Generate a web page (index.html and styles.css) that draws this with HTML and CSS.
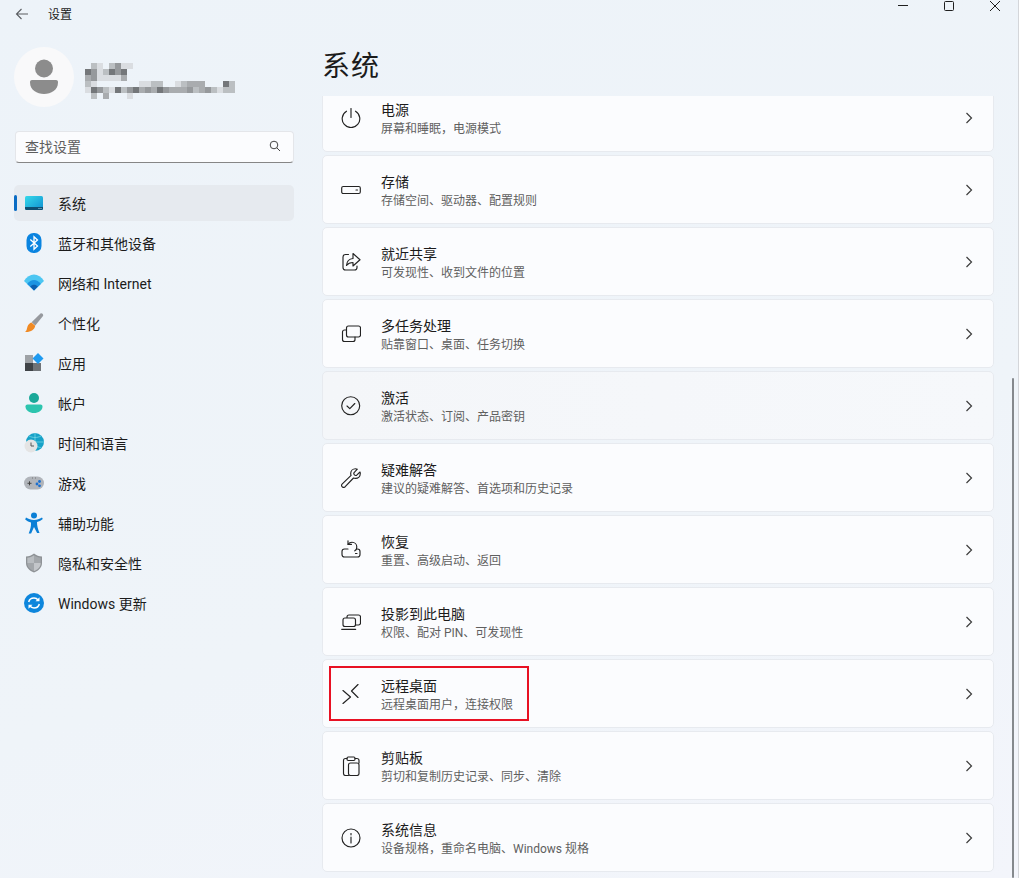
FILE: index.html
```html
<!DOCTYPE html>
<html lang="zh-CN">
<head>
  <meta charset="UTF-8">
  <title>设置</title>
  <meta name="viewport" content="width=device-width, initial-scale=1.0">
  <link rel="stylesheet" href="styles.css">
</head>
<body>

<!-- Title bar -->
<div class="titlebar">
  <svg class="back" width="14" height="12" viewBox="0 0 14 12"><path d="M13 6H1.500M6.500 1 1.500 6l5 5"/></svg>
  <span class="app-name">设置</span>
  <div class="win-controls">
    <svg width="12" height="12" viewBox="0 0 12 12"><path d="M1 5.500H11"/></svg>
    <svg width="12" height="12" viewBox="0 0 12 12"><rect x="1.500" y="1.500" width="9" height="9" rx="1"/></svg>
    <svg width="12" height="12" viewBox="0 0 12 12"><path d="M1 1 11 11M11 1 1 11"/></svg>
  </div>
</div>

<div class="layout">

  <!-- Sidebar -->
  <aside class="sidebar">
    <div class="profile">
      <div class="avatar">
        <svg width="30" height="36" viewBox="0 0 30 36">
          <circle cx="15" cy="9.500" r="9" fill="#8c8c8c"/>
          <path d="M3 21h24c1.700 0 2 1 2 2.500C29 31 22 35 15 35S1 31 1 23.500C1 22 1.300 21 3 21z" fill="#8c8c8c"/>
        </svg>
      </div>
      <svg class="mosaic" width="150" height="36" viewBox="85 63 150 36">
        <g fill="#bbbfc2"><rect x="91" y="63" width="6" height="6"/><rect x="109" y="63" width="6" height="6"/><rect x="103" y="69" width="6" height="6"/><rect x="181" y="81" width="6" height="6"/><rect x="85" y="81" width="6" height="6"/><rect x="151" y="81" width="6" height="6"/><rect x="157" y="81" width="6" height="6"/><rect x="121" y="87" width="6" height="6"/><rect x="103" y="87" width="6" height="6"/><rect x="193" y="87" width="6" height="6"/><rect x="211" y="87" width="6" height="6"/><rect x="223" y="87" width="6" height="6"/><rect x="229" y="87" width="6" height="6"/><rect x="229" y="81" width="6" height="6"/><rect x="91" y="93" width="6" height="6"/></g>
        <g fill="#96999c"><rect x="115" y="63" width="6" height="6"/><rect x="91" y="69" width="6" height="6"/><rect x="115" y="69" width="6" height="6"/><rect x="91" y="75" width="6" height="6"/><rect x="97" y="87" width="6" height="6"/><rect x="127" y="87" width="6" height="6"/><rect x="145" y="87" width="6" height="6"/><rect x="163" y="87" width="6" height="6"/><rect x="187" y="87" width="6" height="6"/><rect x="205" y="87" width="6" height="6"/></g>
        <g fill="#74777a"><rect x="85" y="69" width="6" height="6"/><rect x="109" y="69" width="6" height="6"/><rect x="121" y="69" width="6" height="6"/><rect x="91" y="87" width="6" height="6"/><rect x="115" y="87" width="6" height="6"/><rect x="133" y="87" width="6" height="6"/><rect x="157" y="87" width="6" height="6"/><rect x="223" y="81" width="6" height="6"/></g>
        <g fill="#a9acaf"><rect x="85" y="75" width="6" height="6"/><rect x="121" y="75" width="6" height="6"/><rect x="187" y="81" width="6" height="6"/><rect x="193" y="81" width="6" height="6"/><rect x="199" y="81" width="6" height="6"/><rect x="139" y="87" width="6" height="6"/><rect x="151" y="87" width="6" height="6"/><rect x="169" y="87" width="6" height="6"/><rect x="175" y="87" width="6" height="6"/><rect x="181" y="87" width="6" height="6"/><rect x="199" y="87" width="6" height="6"/><rect x="103" y="93" width="6" height="6"/></g>
        <g fill="#dadde1"><rect x="97" y="63" width="6" height="6"/><rect x="121" y="63" width="6" height="6"/><rect x="109" y="75" width="6" height="6"/><rect x="115" y="75" width="6" height="6"/><rect x="91" y="81" width="6" height="6"/><rect x="139" y="81" width="6" height="6"/><rect x="145" y="81" width="6" height="6"/><rect x="175" y="81" width="6" height="6"/><rect x="109" y="87" width="6" height="6"/><rect x="217" y="87" width="6" height="6"/><rect x="85" y="87" width="6" height="6"/><rect x="97" y="69" width="6" height="6"/><rect x="97" y="75" width="6" height="6"/><rect x="103" y="75" width="6" height="6"/><rect x="127" y="63" width="6" height="6"/><rect x="127" y="93" width="6" height="6"/></g>
      </svg>
    </div>

    <div class="search">
      <span class="search-text">查找设置</span>
      <svg width="12" height="12" viewBox="0 0 12 12"><circle cx="5" cy="5" r="3.800"/><path d="M7.800 7.800 11 11"/></svg>
    </div>

    <nav class="nav">
      <a class="nav-item active">
        <span class="nav-icon">
          <svg width="20" height="20" viewBox="0 0 20 20">
            <defs><linearGradient id="scr" x1="0" y1="0" x2="1" y2="1"><stop offset="0" stop-color="#36d9ea"/><stop offset="1" stop-color="#0f8fd0"/></linearGradient></defs>
            <rect x="1" y="3" width="18" height="14" rx="1.500" fill="url(#scr)"/>
            <path d="M1 14h18v1.500c0 .8-.7 1.500-1.500 1.500h-15C1.700 17 1 16.300 1 15.500z" fill="#0e4f72"/>
            <path d="M14.500 15.500h1M16.500 15.500h1" stroke="#9fd6ea" stroke-width="1"/>
          </svg>
        </span>
        系统
      </a>
      <a class="nav-item">
        <span class="nav-icon">
          <svg width="20" height="22" viewBox="0 0 20 22">
            <rect x="2.500" y="1" width="15" height="20" rx="7" fill="#0a84e0"/>
            <path d="M6.300 7.500l7.200 6.500-3.500 3.300V4.700l3.500 3.300-7.200 6.500" fill="none" stroke="#fff" stroke-width="1.300"/>
          </svg>
        </span>
        蓝牙和其他设备
      </a>
      <a class="nav-item">
        <span class="nav-icon">
          <svg width="20" height="20" viewBox="0 0 20 20">
            <path d="M0 8C5-.7 15-.7 20 8l-10 9.500z" fill="#4cc6f2"/>
            <path d="M3.200 11C7 5.800 13 5.800 16.800 11L10 17.500z" fill="#1c94e2"/>
            <path d="M6.200 13.600c2.300-2.400 5.300-2.400 7.600 0L10 17.500z" fill="#0c5fb0"/>
          </svg>
        </span>
        网络和 Internet
      </a>
      <a class="nav-item">
        <span class="nav-icon">
          <svg width="20" height="20" viewBox="0 0 20 20">
            <path d="M16.500.6c1.200-.9 3.300.9 2.500 2.300L11.300 12.500 7.600 9.200z" fill="#96999e"/>
            <path d="M7.400 9.400l3.800 3.300c-.4 3.500-4.500 6.700-10.200 6.300 1.900-1.200 1.700-3.400 2.500-5.600.7-2 2.300-3.600 3.900-4z" fill="#f08a24"/>
          </svg>
        </span>
        个性化
      </a>
      <a class="nav-item">
        <span class="nav-icon">
          <svg width="20" height="20" viewBox="0 0 20 20">
            <rect x="1" y="2" width="8" height="8" fill="#9ea2a6"/>
            <rect x="1" y="10" width="8" height="8" fill="#3f4347"/>
            <rect x="9" y="10" width="8" height="8" fill="#6f7377"/>
            <path d="M14 0l5.500 5.500L14 11 8.500 5.500z" fill="#1e9af0"/>
          </svg>
        </span>
        应用
      </a>
      <a class="nav-item">
        <span class="nav-icon">
          <svg width="20" height="22" viewBox="0 0 20 22">
            <circle cx="10" cy="6" r="5" fill="#1aa899"/>
            <path d="M3.500 12.500h13c1.200 0 2 .8 2 2 0 4-4 6.500-8.500 6.500s-8.500-2.500-8.500-6.500c0-1.200.8-2 2-2z" fill="#2cc4ae"/>
          </svg>
        </span>
        帐户
      </a>
      <a class="nav-item">
        <span class="nav-icon">
          <svg width="20" height="20" viewBox="0 0 20 20">
            <circle cx="11" cy="9" r="9" fill="#17a2c8"/>
            <path d="M11 0v18M2 9h18M5 3c4 2 8 2 12 0M5 15c4-2 8-2 12 0" stroke="#7fdbe8" stroke-width=".7" fill="none"/>
            <circle cx="7" cy="13" r="6.500" fill="#e4e4e4"/>
            <path d="M7 9.500V13h3" stroke="#555" stroke-width="1" fill="none"/>
          </svg>
        </span>
        时间和语言
      </a>
      <a class="nav-item">
        <span class="nav-icon">
          <svg width="20" height="20" viewBox="0 0 20 20">
            <rect x="0" y="3.500" width="20" height="13" rx="6.500" fill="#b0b4ba"/>
            <path d="M3.500 10.300h4M5.500 8.300v4" stroke="#444" stroke-width="1"/>
            <path d="M8 5h1M11 5h1" stroke="#666" stroke-width=".8"/>
            <circle cx="15.500" cy="8.500" r="1.400" fill="#1a6fd0"/>
            <circle cx="13" cy="11" r="1.400" fill="#1a6fd0"/>
            <circle cx="15.500" cy="12.800" r="1.400" fill="#1a6fd0"/>
          </svg>
        </span>
        游戏
      </a>
      <a class="nav-item">
        <span class="nav-icon">
          <svg width="20" height="22" viewBox="0 0 20 22">
            <circle cx="10" cy="3.500" r="3" fill="#0a7fd6"/>
            <path d="M2 5.500c2.500 1.600 5 2.500 8 2.500s5.500-.9 8-2.500l.8 1.500c-1.800 1.500-3.800 2.500-5.800 3 0 3.500.8 7 2.500 11h-2.400L10 15l-2.900 6.500H4.700c1.700-4 2.500-7.500 2.300-11-2-.5-4-1.500-5.800-3z" fill="#0a7fd6"/>
          </svg>
        </span>
        辅助功能
      </a>
      <a class="nav-item">
        <span class="nav-icon">
          <svg width="20" height="20" viewBox="0 0 20 20">
            <path d="M10 .5c2.500 2 5 2.800 8 3v6.500c0 4.500-3.500 7.700-8 9.500-4.500-1.800-8-5-8-9.500V3.500c3-.2 5.500-1 8-3z" fill="#8e9296"/>
            <path d="M10 2.200C7.900 3.700 5.800 4.400 3.300 4.700V10H10z" fill="#b9bdc1"/>
            <path d="M10 2.200c2.100 1.500 4.200 2.200 6.700 2.500V10H10z" fill="#a3a7ab"/>
            <path d="M3.300 10H10v8.100C6.200 16.500 3.300 14 3.300 10z" fill="#a3a7ab"/>
            <path d="M10 10h6.700c0 4-2.900 6.500-6.700 8.100z" fill="#c3c6ca"/>
          </svg>
        </span>
        隐私和安全性
      </a>
      <a class="nav-item">
        <span class="nav-icon">
          <svg width="20" height="20" viewBox="0 0 20 20">
            <circle cx="10" cy="10" r="10" fill="#0e86dc"/>
            <path d="M4.700 9C5.300 6.400 7.500 5 10 5c1.800 0 3.200.8 4.300 2.200M15.300 11c-.6 2.600-2.800 4-5.300 4-1.800 0-3.200-.8-4.300-2.200" fill="none" stroke="#fff" stroke-width="1.500"/>
            <path d="M15.500 4.200v4h-4zM4.500 15.800v-4h4z" fill="#fff"/>
          </svg>
        </span>
        Windows 更新
      </a>
    </nav>
  </aside>

  <!-- Main content -->
  <main class="main">
    <h1 class="page-title">系统</h1>
    <div class="card-list">

      <div class="card first">
        <svg class="card-icon" width="20" height="20" viewBox="0 0 20 20"><path d="M5.500 3.200a8.800 8.800 0 1 0 9 0M10 .5v9"/></svg>
        <div class="card-text"><div class="card-title">电源</div><div class="card-sub">屏幕和睡眠，电源模式</div></div>
        <svg class="chevron" width="8" height="12" viewBox="0 0 8 12"><path d="M1.500 1l5 5-5 5"/></svg>
      </div>

      <div class="card">
        <svg class="card-icon" width="20" height="20" viewBox="0 0 20 20"><rect x=".7" y="6.500" width="18.600" height="7" rx="1.500"/><path d="M15 10h1.500"/></svg>
        <div class="card-text"><div class="card-title">存储</div><div class="card-sub">存储空间、驱动器、配置规则</div></div>
        <svg class="chevron" width="8" height="12" viewBox="0 0 8 12"><path d="M1.500 1l5 5-5 5"/></svg>
      </div>

      <div class="card">
        <svg class="card-icon" width="20" height="20" viewBox="0 0 20 20"><path d="M7.500 2.500H4.500c-1.400 0-2.500 1.100-2.500 2.500v10.500c0 1.400 1.100 2.500 2.500 2.500h9c1.400 0 2.500-1.100 2.500-2.500V14"/><path d="M12 1.500l7 6.300-7 6.200v-3.500c-3 0-5 1-6.500 3 .3-4 2.700-6.700 6.500-7z"/></svg>
        <div class="card-text"><div class="card-title">就近共享</div><div class="card-sub">可发现性、收到文件的位置</div></div>
        <svg class="chevron" width="8" height="12" viewBox="0 0 8 12"><path d="M1.500 1l5 5-5 5"/></svg>
      </div>

      <div class="card">
        <svg class="card-icon" width="20" height="20" viewBox="0 0 20 20"><rect x="5.500" y="2" width="14" height="11" rx="2"/><path d="M5.500 6H3.500C2.400 6 1.500 6.900 1.500 8v7.500c0 1.100.9 2 2 2h8.500c1.100 0 2-.9 2-2V13"/></svg>
        <div class="card-text"><div class="card-title">多任务处理</div><div class="card-sub">贴靠窗口、桌面、任务切换</div></div>
        <svg class="chevron" width="8" height="12" viewBox="0 0 8 12"><path d="M1.500 1l5 5-5 5"/></svg>
      </div>

      <div class="card hover">
        <svg class="card-icon" width="20" height="20" viewBox="0 0 20 20"><circle cx="9.700" cy="9.700" r="9"/><path d="M6 10l2.800 2.700L13.800 7.500"/></svg>
        <div class="card-text"><div class="card-title">激活</div><div class="card-sub">激活状态、订阅、产品密钥</div></div>
        <svg class="chevron" width="8" height="12" viewBox="0 0 8 12"><path d="M1.500 1l5 5-5 5"/></svg>
      </div>

      <div class="card">
        <svg class="card-icon" width="20" height="20" viewBox="0 0 20 20"><path d="M14.500.7c-2.700 0-4.800 2.100-4.800 4.800 0 .7.100 1.300.4 1.900L1.300 15.800c-1 1-1 2.200-.1 3 .8.800 2 .8 3-.1l8.300-8.700c.6.300 1.300.4 2 .4 2.700 0 4.800-2.100 4.800-4.800 0-.6-.1-1.100-.3-1.600l-3.300 3.200c-.8.500-1.700.3-2.300-.3-.6-.6-.8-1.500-.3-2.300l3.200-3.400C15.800.9 15.200.7 14.500.7z"/></svg>
        <div class="card-text"><div class="card-title">疑难解答</div><div class="card-sub">建议的疑难解答、首选项和历史记录</div></div>
        <svg class="chevron" width="8" height="12" viewBox="0 0 8 12"><path d="M1.500 1l5 5-5 5"/></svg>
      </div>

      <div class="card">
        <svg class="card-icon" width="20" height="20" viewBox="0 0 20 20"><path d="M7 .8v3.500h3.500"/><path d="M7 4.300C8 3 9.500 2.200 11 2.200c2.700 0 4.800 2.100 4.800 4.700 0 1.600-.7 3-2 3.900"/><path d="M7 9H3.500C1.900 9 1 10 1 11.500v3C1 16 2 17 3.500 17h13c1.500 0 2.500-1 2.500-2.500v-3c0-1.500-1-2.500-2.500-2.500h-1"/><path d="M14.500 13.500H16"/></svg>
        <div class="card-text"><div class="card-title">恢复</div><div class="card-sub">重置、高级启动、返回</div></div>
        <svg class="chevron" width="8" height="12" viewBox="0 0 8 12"><path d="M1.500 1l5 5-5 5"/></svg>
      </div>

      <div class="card">
        <svg class="card-icon" width="20" height="20" viewBox="0 0 20 20"><path d="M6 5.500V5c0-1.100.9-2 2-2h9.500c1.100 0 2 .9 2 2v6c0 1.100-.9 2-2 2H15"/><rect x="2" y="6" width="12.500" height="8.500" rx="2"/><path d="M.7 17.300h14"/></svg>
        <div class="card-text"><div class="card-title">投影到此电脑</div><div class="card-sub">权限、配对 PIN、可发现性</div></div>
        <svg class="chevron" width="8" height="12" viewBox="0 0 8 12"><path d="M1.500 1l5 5-5 5"/></svg>
      </div>

      <div class="card">
        <svg class="card-icon" width="20" height="20" viewBox="0 0 20 20"><path d="M2 6.500 9.500 13 2 19.500M17 .5 10.500 7l6.500 6.500"/></svg>
        <div class="card-text"><div class="card-title">远程桌面</div><div class="card-sub">远程桌面用户，连接权限</div></div>
        <svg class="chevron" width="8" height="12" viewBox="0 0 8 12"><path d="M1.500 1l5 5-5 5"/></svg>
        <div class="highlight"></div>
      </div>

      <div class="card">
        <svg class="card-icon" width="20" height="20" viewBox="0 0 20 20"><path d="M6 2.500H4.500c-1.200 0-2 .9-2 2v13c0 1.200.8 2 2 2h3"/><path d="M14 2.500h1.800c1.300 0 2.200.9 2.200 2V7"/><rect x="6" y="1" width="8" height="3.500" rx="1.200"/><rect x="7.500" y="7" width="10.500" height="12.500" rx="2"/></svg>
        <div class="card-text"><div class="card-title">剪贴板</div><div class="card-sub">剪切和复制历史记录、同步、清除</div></div>
        <svg class="chevron" width="8" height="12" viewBox="0 0 8 12"><path d="M1.500 1l5 5-5 5"/></svg>
      </div>

      <div class="card">
        <svg class="card-icon" width="20" height="20" viewBox="0 0 20 20"><circle cx="10" cy="10" r="9"/><path d="M10 9v6"/><path d="M10 5.500v1.300"/></svg>
        <div class="card-text"><div class="card-title">系统信息</div><div class="card-sub">设备规格，重命名电脑、Windows 规格</div></div>
        <svg class="chevron" width="8" height="12" viewBox="0 0 8 12"><path d="M1.500 1l5 5-5 5"/></svg>
      </div>

    </div>
    <div class="scrollbar"></div>
  </main>
</div>

</body>
</html>
```

FILE: styles.css
```css
* { box-sizing: border-box; }

html, body { height: 100%; }

body {
  margin: 0;
  overflow: hidden;
  font-family: Roboto, "Noto Sans CJK SC", sans-serif;
  font-size: 14px;
  color: #1b1b1b;
  background: linear-gradient(160deg, #edf3f9 0%, #eff4f9 60%, #f3f5fb 100%);
  border-right: 1px solid #d4d6da;
}

/* Title bar */
.titlebar {
  display: flex;
  align-items: center;
  height: 30px;
  padding: 0 0 2px 15px;
}
.back { fill: none; stroke: #5a5d61; stroke-width: 1.100; }
.app-name {
  margin: 0 0 2px 19px;
  font-size: 12px;
}
.win-controls {
  display: flex;
  gap: 34px;
  margin-left: auto;
  margin-right: 17px;
  align-self: flex-start;
}
.win-controls svg { fill: none; stroke: #1f1f1f; stroke-width: 1; }

.layout {
  display: flex;
  height: 848px;
}

/* Sidebar */
.sidebar {
  width: 310px;
  flex: none;
  padding: 17px 16px 0 14px;
}
.profile {
  display: flex;
  align-items: center;
  height: 60px;
}
.avatar {
  width: 60px;
  height: 60px;
  display: flex;
  align-items: center;
  justify-content: center;
  border-radius: 50%;
  background: #f9f9fa;
}
.mosaic { margin-left: 11px; margin-top: 8px; }

.search {
  display: flex;
  align-items: center;
  justify-content: space-between;
  height: 32px;
  margin: 24px 0 0 1px;
  padding: 0 12px 2px 9px;
  background: #fbfcfe;
  border: 1px solid #e4e6ea;
  border-bottom: 1px solid #868686;
  border-radius: 4px;
}
.search-text { color: #5d5d5d; }
.search svg { fill: none; stroke: #444; stroke-width: 1; }

.nav {
  display: flex;
  flex-direction: column;
  gap: 4px;
  margin-top: 22px;
}
.nav-item {
  position: relative;
  display: flex;
  align-items: center;
  height: 36px;
  padding-left: 10px;
  border-radius: 5px;
  color: #1b1b1b;
}
.nav-item.active { background: #e6eaef; }
.nav-item.active::before {
  content: "";
  position: absolute;
  left: 0;
  top: 10px;
  width: 3px;
  height: 16px;
  border-radius: 2px;
  background: #0a6cc4;
}
.nav-icon {
  width: 20px;
  height: 22px;
  margin-right: 14px;
  display: flex;
  align-items: center;
  justify-content: center;
}

/* Main content */
.main {
  position: relative;
  flex: 1;
  min-width: 0;
  padding-left: 12px;
}
.page-title {
  margin: 0;
  height: 66px;
  font-size: 28px;
  font-weight: 400;
  line-height: 74px;
  letter-spacing: 1px;
}
.card-list {
  display: flex;
  flex-direction: column;
  gap: 3px;
  width: 672px;
  height: 782px;
  overflow: hidden;
}
.card {
  position: relative;
  display: flex;
  align-items: center;
  flex: none;
  height: 69px;
  padding: 1px 20px 0 18px;
  background: #fbfcfe;
  border: 1px solid #e7eaef;
  border-radius: 5px;
}
.card.first { margin-top: -13px; }
.card.hover { background: linear-gradient(90deg, #f4f6f9, #f6f8fb); }
.card-icon {
  flex: none;
  fill: none;
  stroke: #222;
  stroke-width: 1.150;
  stroke-linecap: round;
  stroke-linejoin: round;
}
.card-text { margin-left: 20px; padding-top: 1px; flex: 1; }
.card-title { line-height: 19px; font-size: 14px; }
.card-sub { margin-top: 1px; line-height: 16px; font-size: 12px; color: #5f5f5f; }
.chevron {
  flex: none;
  fill: none;
  stroke: #3c3c3c;
  stroke-width: 1.200;
}

/* Red annotation box around the remote desktop entry */
.highlight {
  position: absolute;
  left: 6px;
  top: 6px;
  width: 200px;
  height: 55px;
  border: 2px solid #e81123;
  pointer-events: none;
}

.scrollbar {
  position: absolute;
  right: 4px;
  bottom: 0;
  width: 2px;
  height: 500px;
  background: #85898d;
  border-radius: 1px;
}
```
